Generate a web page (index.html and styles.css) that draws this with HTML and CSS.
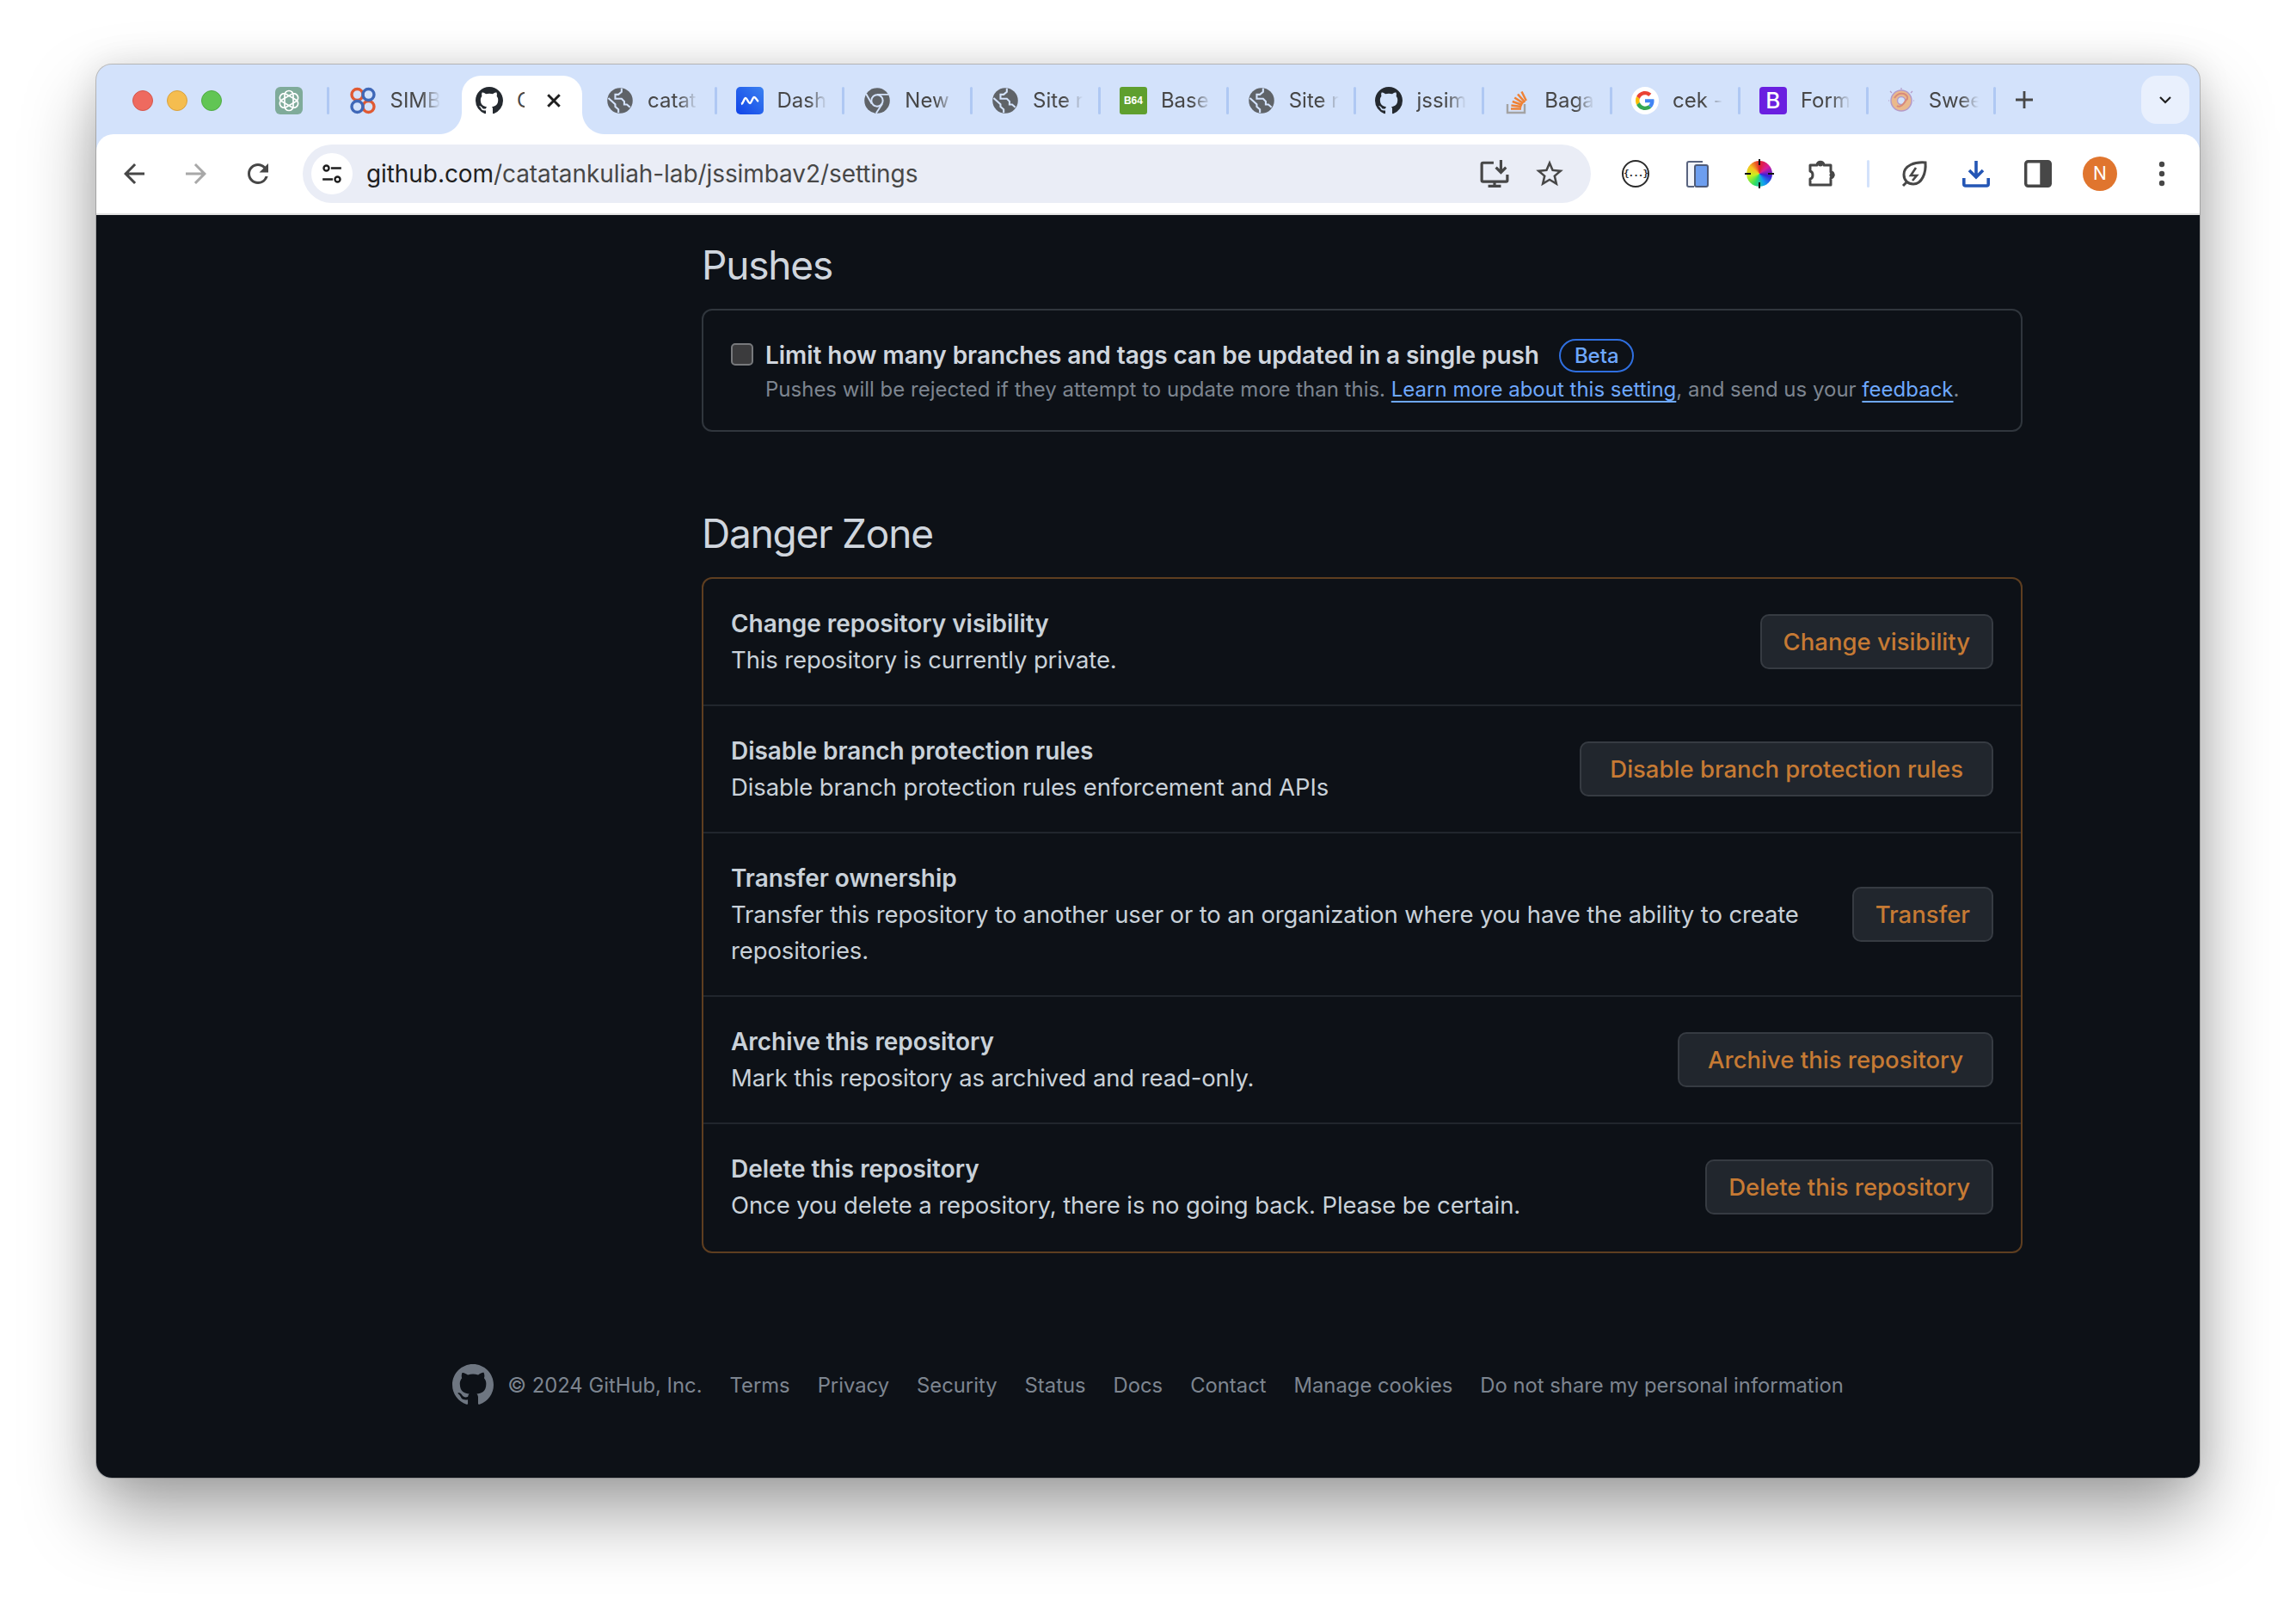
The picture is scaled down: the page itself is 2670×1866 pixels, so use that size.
FILE: index.html
```html
<!DOCTYPE html>
<html lang="en">
<head>
<meta charset="utf-8">
<title>Settings</title>
<link rel="stylesheet" href="styles.css">
</head>
<body>
<svg class="sprite" width="0" height="0" aria-hidden="true">
  <symbol id="gh" viewBox="0 0 16 16"><path d="M8 0c4.42 0 8 3.58 8 8a8.013 8.013 0 0 1-5.45 7.59c-.4.08-.55-.17-.55-.38 0-.27.01-1.13.01-2.2 0-.75-.25-1.23-.54-1.48 1.78-.2 3.65-.88 3.65-3.95 0-.88-.31-1.59-.82-2.15.08-.2.36-1.02-.08-2.12 0 0-.67-.22-2.2.82-.64-.18-1.32-.27-2-.27-.68 0-1.36.09-2 .27-1.53-1.03-2.2-.82-2.2-.82-.44 1.1-.16 1.92-.08 2.12-.51.56-.82 1.28-.82 2.15 0 3.06 1.86 3.75 3.65 3.95-.23.2-.44.55-.51 1.07-.46.21-1.61.55-2.33-.66-.15-.24-.6-.83-1.23-.82-.67.01-.27.38.01.53.34.19.73.9.82 1.13.16.45.68 1.31 2.69.94 0 .67.01 1.3.01 1.49 0 .21-.15.45-.55.38A7.995 7.995 0 0 1 0 8c0-4.42 3.58-8 8-8Z"/></symbol>
  <symbol id="globe" viewBox="-1 -1 26 26"><circle cx="12" cy="12" r="12" fill="#5f6368"/><path d="M1 9.500l6.500 6v2.200l3 2.600v3M13.500 .5v3.200l-3 2.500H7.500v4h6l2.500 2.500v3h2.500l3 2.600" fill="none" stroke="#d3e2fb" stroke-width="1.700"/></symbol>
</svg>

<div class="window">
  <header class="tabstrip">
    <div class="lights">
      <span class="light light-red"></span>
      <span class="light light-yellow"></span>
      <span class="light light-green"></span>
    </div>
    <div class="tab tab-pinned">
      <svg class="fav" viewBox="0 0 32 32"><rect width="32" height="32" rx="6" fill="#7fab9a"/><g fill="none" stroke="#fff" stroke-width="1.700"><rect x="11" y="4.500" width="10" height="23" rx="5"/><rect x="11" y="4.500" width="10" height="23" rx="5" transform="rotate(60 16 16)"/><rect x="11" y="4.500" width="10" height="23" rx="5" transform="rotate(120 16 16)"/></g></svg>
      <span class="sep"></span>
    </div>
    <div class="tab tab-simb">
      <svg class="fav" viewBox="0 0 32 32"><g fill="none" stroke-width="3.400"><circle cx="9.500" cy="9" r="6.500" stroke="#e05a33"/><circle cx="22.500" cy="23" r="6.500" stroke="#e05a33"/><circle cx="22.500" cy="9" r="6.500" stroke="#3f68b8"/><circle cx="9.500" cy="23" r="6.500" stroke="#3f68b8"/></g></svg>
      <span class="tab-label">SIMB</span>
    </div>
    <div class="tab tab-active">
      <svg class="fav fav-dark"><use href="#gh"/></svg>
      <span class="tab-label tab-label-cut">C</span>
      <svg class="tab-close" viewBox="0 0 16 16"><path d="M2 2l12 12M14 2L2 14" stroke="#1f1f1f" stroke-width="2.600" fill="none"/></svg>
    </div>
    <div class="tab tab-catat">
      <svg class="fav"><use href="#globe"/></svg>
      <span class="tab-label">catat</span>
      <span class="sep"></span>
    </div>
    <div class="tab">
      <svg class="fav" viewBox="0 0 32 32"><defs><linearGradient id="dash" x1="1" y1="0" x2="0" y2="1"><stop offset="0" stop-color="#3b82f0"/><stop offset="1" stop-color="#1043e8"/></linearGradient></defs><rect width="32" height="32" rx="5" fill="url(#dash)"/><path d="M6 20c3-1 3-7 5-7s3 6 5 6 3-7 5-7 3 4 5 5" fill="none" stroke="#fff" stroke-width="2.400"/></svg>
      <span class="tab-label">Dash</span>
      <span class="sep"></span>
    </div>
    <div class="tab">
      <svg class="fav" viewBox="-1 -1 26 26"><circle cx="12" cy="12" r="12" fill="#5f6368"/><circle cx="12" cy="12" r="5.400" fill="#5f6368" stroke="#d3e2fb" stroke-width="1.600"/><path d="M12 6.200h11M7 15l-5.500-9.500M16.800 15l-5.800 9" stroke="#d3e2fb" stroke-width="1.600" fill="none"/></svg>
      <span class="tab-label">New</span>
      <span class="sep"></span>
    </div>
    <div class="tab">
      <svg class="fav"><use href="#globe"/></svg>
      <span class="tab-label">Site r</span>
      <span class="sep"></span>
    </div>
    <div class="tab">
      <span class="fav fav-b64">B64</span>
      <span class="tab-label">Base</span>
      <span class="sep"></span>
    </div>
    <div class="tab">
      <svg class="fav"><use href="#globe"/></svg>
      <span class="tab-label">Site r</span>
      <span class="sep"></span>
    </div>
    <div class="tab">
      <svg class="fav fav-dark"><use href="#gh"/></svg>
      <span class="tab-label">jssim</span>
      <span class="sep"></span>
    </div>
    <div class="tab">
      <svg class="fav" viewBox="0 0 32 32"><path d="M5 20v10h20V20" fill="none" stroke="#a3a3a3" stroke-width="2.400"/><path d="M9 25.500h12M9.400 21.500l12 1.500M10.800 17l11.500 4M13.300 12.500l10.200 6.600M17 8.500l8.300 9.300M21.500 5.500l5.300 10.500" stroke="#ef8236" stroke-width="2.500" fill="none"/></svg>
      <span class="tab-label">Baga</span>
      <span class="sep"></span>
    </div>
    <div class="tab">
      <span class="fav fav-google"><svg viewBox="0 0 48 48"><path fill="#EA4335" d="M24 9.500c3.540 0 6.710 1.220 9.210 3.600l6.850-6.850C35.900 2.380 30.470 0 24 0 14.620 0 6.510 5.380 2.560 13.220l7.980 6.190C12.430 13.720 17.740 9.500 24 9.500z"/><path fill="#4285F4" d="M46.980 24.550c0-1.570-.15-3.090-.38-4.550H24v9.020h12.940c-.58 2.960-2.260 5.480-4.780 7.180l7.730 6c4.510-4.180 7.090-10.360 7.090-17.650z"/><path fill="#FBBC05" d="M10.530 28.590c-.48-1.450-.76-2.990-.76-4.590s.27-3.140.76-4.590l-7.980-6.190C.92 16.460 0 20.120 0 24c0 3.880.92 7.540 2.560 10.780l7.970-6.190z"/><path fill="#34A853" d="M24 48c6.480 0 11.930-2.130 15.890-5.810l-7.730-6c-2.150 1.450-4.920 2.300-8.160 2.300-6.260 0-11.570-4.220-13.470-9.910l-7.980 6.190C6.510 42.620 14.620 48 24 48z"/></svg></span>
      <span class="tab-label">cek -</span>
      <span class="sep"></span>
    </div>
    <div class="tab">
      <span class="fav fav-boot">B</span>
      <span class="tab-label">Form</span>
      <span class="sep"></span>
    </div>
    <div class="tab">
      <svg class="fav" viewBox="0 0 32 32"><circle cx="16" cy="16" r="12" fill="#eab98c" stroke="#b49ac8" stroke-width="1.500"/><circle cx="16" cy="16" r="4.500" fill="#d3e2fb" stroke="#b49ac8" stroke-width="1.500"/><path d="M8 13c3-5 7-6 11-5 3 1 5 4 4 6-2 1-2 3-4 5-2 3-6 5-8 3" fill="none" stroke="#d98a7a" stroke-width="2"/><path d="M16 1v2M29 5l-2 2M3 5l2 2M1 16h1M30 16h1" stroke="#b49ac8" stroke-width="1.200"/></svg>
      <span class="tab-label">Swee</span>
      <span class="sep"></span>
    </div>
    <svg class="tab-new" viewBox="0 0 24 24"><path d="M12 2v20M2 12h20" stroke="#474747" stroke-width="2.800"/></svg>
    <div class="tab-search">
      <svg viewBox="0 0 16 16"><path d="M2 5l6 6 6-6" fill="none" stroke="#1f1f1f" stroke-width="2.200"/></svg>
    </div>
  </header>

  <nav class="toolbar">
    <span class="tool tool-nav"><svg viewBox="0 0 24 24"><path fill="#474747" d="M20 11H7.830l5.590-5.590L12 4l-8 8 8 8 1.410-1.410L7.830 13H20v-2z"/></svg></span>
    <span class="tool tool-nav"><svg viewBox="0 0 24 24"><path fill="#a8a8a8" d="M12 4l-1.410 1.410L16.170 11H4v2h12.170l-5.580 5.590L12 20l8-8z"/></svg></span>
    <span class="tool tool-nav"><svg viewBox="0 0 24 24"><path fill="#474747" d="M17.650 6.350A7.958 7.958 0 0 0 12 4c-4.420 0-7.990 3.580-7.990 8s3.570 8 7.990 8c3.730 0 6.840-2.550 7.730-6h-2.080A5.990 5.990 0 0 1 12 18c-3.310 0-6-2.690-6-6s2.690-6 6-6c1.660 0 3.140.69 4.220 1.780L13 11h7V4l-2.350 2.350z"/></svg></span>
    <div class="omnibox">
      <span class="site-info"><svg viewBox="0 0 24 24"><g fill="none" stroke="#1f1f1f" stroke-width="2.200"><circle cx="6" cy="6" r="2.800"/><circle cx="18" cy="18" r="2.800"/><path d="M11 6h11M2 18h11"/></g></svg></span>
      <span class="url"><span class="url-host">github.com</span>/catatankuliah-lab/jssimbav2/settings</span>
      <span class="omni-tool"><svg viewBox="0 0 32 32"><path d="M15 4H3.500A1.500 1.500 0 0 0 2 5.500V23a1.500 1.500 0 0 0 1.500 1.500h25A1.500 1.500 0 0 0 30 23V17" fill="none" stroke="#474747" stroke-width="3"/><path d="M9 29.500h14M16 24v5" stroke="#474747" stroke-width="3"/><path d="M23 1v12M17.500 9l5.500 5.500L28.500 9" fill="none" stroke="#474747" stroke-width="3"/></svg></span>
      <span class="omni-tool omni-star"><svg viewBox="0 0 24 24"><path fill="#474747" d="M22 9.240l-7.190-.62L12 2 9.190 8.630 2 9.240l5.460 4.730L5.820 21 12 17.270 18.180 21l-1.630-7.030L22 9.240zM12 15.400l-3.760 2.270 1-4.280-3.320-2.880 4.380-.38L12 6.100l1.710 4.040 4.380.38-3.320 2.880 1 4.280L12 15.400z"/></svg></span>
    </div>
    <div class="tools">
      <span class="tool"><span class="json-icon">{...}</span></span>
      <span class="tool"><svg viewBox="0 0 28 32"><path d="M20 2H4a2 2 0 0 0-2 2v25a2 2 0 0 0 2 2h6" fill="#f4f6fb" stroke="#59647f" stroke-width="2"/><rect x="11" y="6" width="15" height="25" rx="2" fill="#6d9eef" stroke="#4f5b78" stroke-width="2"/></svg></span>
      <span class="tool"><span class="wheel"></span></span>
      <span class="tool"><svg viewBox="0 0 32 32"><path d="M3 6h8c0-5 8-5 8 0h8v8c4 0 4 6 0 7v8H3v-7c4-1 4-8 0-9z" fill="none" stroke="#474747" stroke-width="3" stroke-linejoin="round"/><circle cx="15" cy="4.500" r="3" fill="#474747"/><circle cx="28.500" cy="17.500" r="3" fill="#474747"/></svg></span>
      <span class="tool-sep"></span>
      <span class="tool"><svg viewBox="0 0 32 32"><path d="M29 3C17 2 4 6 4 17c0 7 5 11 11 11 10 0 15-13 14-25z" fill="none" stroke="#474747" stroke-width="3"/><path d="M7 26l-4 4" stroke="#474747" stroke-width="3"/><path d="M18 9l-6 9h7l-5 6" fill="none" stroke="#474747" stroke-width="2.600"/></svg></span>
      <span class="tool"><svg viewBox="0 0 32 32"><path d="M16 1v18M8 12l8 8 8-8" fill="none" stroke="#2456b5" stroke-width="3.600"/><path d="M1.800 21v7a2 2 0 0 0 2 2h24.400a2 2 0 0 0 2-2v-7" fill="none" stroke="#2456b5" stroke-width="3.600"/></svg></span>
      <span class="tool"><svg viewBox="0 0 28 28"><rect x="1.500" y="1.500" width="25" height="25" rx="2.500" fill="#fff" stroke="#474747" stroke-width="3"/><rect x="16" y="1.500" width="10.500" height="25" fill="#474747"/></svg></span>
      <span class="tool"><span class="avatar">N</span></span>
      <span class="tool"><svg viewBox="0 0 8 32"><circle cx="4" cy="5" r="3.200" fill="#474747"/><circle cx="4" cy="16" r="3.200" fill="#474747"/><circle cx="4" cy="27" r="3.200" fill="#474747"/></svg></span>
    </div>
  </nav>

  <main class="page">
    <div class="column">
      <h2 class="section-title">Pushes</h2>
      <section class="box">
        <div class="push-row">
          <span class="checkbox"></span>
          <div>
            <div class="push-title">Limit how many branches and tags can be updated in a single push <span class="beta">Beta</span></div>
            <p class="push-note">Pushes will be rejected if they attempt to update more than this. <a href="#">Learn more about this setting</a>, and send us your <a href="#">feedback</a>.</p>
          </div>
        </div>
      </section>

      <h2 class="section-title section-title-danger">Danger Zone</h2>
      <section class="box box-danger">
        <div class="danger-row">
          <div class="danger-text"><strong>Change repository visibility</strong><p>This repository is currently private.</p></div>
          <button class="btn">Change visibility</button>
        </div>
        <div class="danger-row">
          <div class="danger-text"><strong>Disable branch protection rules</strong><p>Disable branch protection rules enforcement and APIs</p></div>
          <button class="btn btn-wide">Disable branch protection rules</button>
        </div>
        <div class="danger-row">
          <div class="danger-text"><strong>Transfer ownership</strong><p>Transfer this repository to another user or to an organization where you have the ability to create repositories.</p></div>
          <button class="btn">Transfer</button>
        </div>
        <div class="danger-row">
          <div class="danger-text"><strong>Archive this repository</strong><p>Mark this repository as archived and read-only.</p></div>
          <button class="btn btn-wide">Archive this repository</button>
        </div>
        <div class="danger-row">
          <div class="danger-text"><strong>Delete this repository</strong><p>Once you delete a repository, there is no going back. Please be certain.</p></div>
          <button class="btn">Delete this repository</button>
        </div>
      </section>
    </div>

    <footer class="footer">
      <svg class="footer-logo"><use href="#gh"/></svg>
      <span class="footer-copy">© 2024 GitHub, Inc.</span>
      <a href="#">Terms</a>
      <a href="#">Privacy</a>
      <a href="#">Security</a>
      <a href="#">Status</a>
      <a href="#">Docs</a>
      <a href="#">Contact</a>
      <a href="#">Manage cookies</a>
      <a href="#">Do not share my personal information</a>
    </footer>
  </main>
</div>
</body>
</html>
```
FILE: styles.css
```css
* { box-sizing: border-box; }
html, body { margin: 0; height: 100%; }
body {
  background: #fff;
  padding: 75px 0 0 112px;
  font-family: Inter, "Liberation Sans", sans-serif;
  overflow: hidden;
}
.sprite { display: block; height: 0; }

.window {
  width: 2446px;
  height: 1643px;
  border-radius: 18px;
  overflow: hidden;
  background: #d3e2fb;
  box-shadow: 0 0 0 1px rgba(120,120,120,.45), 0 42px 84px rgba(0,0,0,.36), 0 0 40px rgba(0,0,0,.1);
  display: flex;
  flex-direction: column;
}

/* Tab strip */
.tabstrip { height: 81px; display: flex; align-items: flex-start; padding-top: 13px; flex: none; }
.lights { display: flex; gap: 16px; margin: 17px 0 0 42px; width: 104px; flex: none; }
.light { width: 24px; height: 24px; border-radius: 50%; border: 1px solid; }
.light-red { background: #ee6a5f; border-color: #d5574c; }
.light-yellow { background: #f5bd4f; border-color: #d9a13c; }
.light-green { background: #61c554; border-color: #50ab44; }

.tab {
  width: 148.800px;
  height: 58px;
  display: flex;
  align-items: center;
  padding-left: 22px;
  flex: none;
  color: #474747;
  font-size: 24px;
}
.tab-pinned { width: 124.500px; padding-left: 62px; }
.tab-simb { width: 149.500px; padding-left: 23px; }
.tab-catat { width: 151.500px; padding-left: 23px; }
.fav { width: 32px; height: 32px; flex: none; display: block; }
.fav-dark { fill: #24292f; }
.fav-b64 {
  background: #5f9f2e;
  border-radius: 3px;
  color: #fff;
  font: 700 12px/32px "Liberation Sans", sans-serif;
  text-align: center;
}
.fav-boot {
  background: #6a1fe0;
  border-radius: 4px;
  color: #fff;
  font: 500 26px/32px Inter, sans-serif;
  text-align: center;
}
.fav-google { background: #fff; border-radius: 50%; padding: 5px; }
.fav-google svg { display: block; width: 22px; height: 22px; }
.tab-label {
  width: 58px;
  margin-left: 16px;
  white-space: nowrap;
  overflow: hidden;
  flex: none;
  line-height: 32px;
  -webkit-mask-image: linear-gradient(90deg, #000 62%, transparent 100%);
  mask-image: linear-gradient(90deg, #000 62%, transparent 100%);
}
.sep { width: 3px; height: 32px; margin-left: auto; background: #afc8f3; border-radius: 2px; flex: none; }

.tab-active {
  position: relative;
  width: 140px;
  height: 68px;
  margin: 0 5px;
  padding: 0 0 10px 16px;
  background: #fff;
  border-radius: 22px 22px 0 0;
}
.tab-active::before, .tab-active::after {
  content: "";
  position: absolute;
  bottom: 0;
  width: 26px;
  height: 26px;
}
.tab-active::before { left: -26px; background: radial-gradient(circle at 0 0, transparent 25.500px, #fff 26.500px); }
.tab-active::after { right: -26px; background: radial-gradient(circle at 100% 0, transparent 25.500px, #fff 26.500px); }
.tab-label-cut { width: 9px; -webkit-mask-image: none; mask-image: none; }
.tab-close { width: 18px; height: 18px; margin-left: 25px; flex: none; }

.tab-new { width: 24px; height: 24px; margin: 16px 0 0 21px; flex: none; }
.tab-search {
  width: 56px;
  height: 56px;
  margin-left: auto;
  margin-right: 12px;
  background: #e9f0fd;
  border-radius: 18px;
  display: flex;
  align-items: center;
  justify-content: center;
  flex: none;
}
.tab-search svg { width: 16px; height: 16px; }

/* Toolbar */
.toolbar {
  height: 94px;
  flex: none;
  background: #fff;
  border-radius: 20px 20px 0 0;
  border-bottom: 2px solid #e3e3e3;
  display: flex;
  align-items: center;
  padding-left: 8px;
}
.tool { width: 72px; height: 44px; display: flex; align-items: center; justify-content: center; flex: none; }
.tool svg { height: 32px; width: 32px; display: block; }
.tool-nav svg { height: 36px; width: 36px; }
.omnibox {
  width: 1498px;
  height: 68px;
  margin-left: 16px;
  background: #eaedf6;
  border-radius: 34px;
  display: flex;
  align-items: center;
  padding: 0 16px 0 10px;
  flex: none;
}
.site-info {
  width: 48px;
  height: 48px;
  background: #fff;
  border-radius: 50%;
  display: flex;
  align-items: center;
  justify-content: center;
  flex: none;
}
.site-info svg { width: 26px; height: 26px; }
.url { margin-left: 16px; font-size: 28px; letter-spacing: -.08px; color: #474747; white-space: nowrap; flex: 1; }
.url-host { color: #1f1f1f; }
.omni-tool { width: 64px; display: flex; justify-content: center; flex: none; }
.omni-tool svg { width: 34px; height: 34px; display: block; }
.omni-star svg { width: 38px; height: 38px; }
.tools { display: flex; align-items: center; margin-left: 16px; }
.tool-sep { width: 36px; display: flex; justify-content: center; flex: none; height: 32px; }
.tool-sep::before { content: ""; width: 3px; background: #d3e2fb; border-radius: 2px; }
.json-icon {
  width: 32px;
  height: 32px;
  border: 2px solid #2b2b2b;
  border-radius: 50%;
  font: 700 11px/28px "DejaVu Sans Mono", monospace;
  color: #2b2b2b;
  text-align: center;
  letter-spacing: -1px;
}
.wheel {
  position: relative;
  width: 30px;
  height: 30px;
  border-radius: 50%;
  background: conic-gradient(#e0202a, #d81e9c, #3a1fd8, #10a0f0, #30e060, #c8f020, #f8c020, #e0202a);
}
.wheel::before, .wheel::after { content: ""; position: absolute; background: #111; }
.wheel::before { left: 14px; top: -2px; width: 2px; height: 34px; background: linear-gradient(#111 0 7px, transparent 7px 27px, #111 27px); }
.wheel::after { top: 14px; left: -2px; height: 2px; width: 34px; background: linear-gradient(90deg, #111 0 7px, transparent 7px 27px, #111 27px); }
.avatar {
  width: 40px;
  height: 40px;
  border-radius: 50%;
  background: #e0752e;
  color: #fff;
  font-size: 21px;
  line-height: 40px;
  text-align: center;
}

/* Page */
.page { flex: 1; background: #0d1117; color: #e6edf3; padding: 0 0 0 704px; min-height: 0; }
.column { width: 1536px; padding-top: 28px; }
.section-title { margin: 0 0 21px; font-size: 46px; line-height: 60px; font-weight: 400; color: #d0d6de; letter-spacing: -1.200px; }
.section-title-danger { margin-top: 88px; }
.box { border: 2px solid #30363d; border-radius: 12px; }
.box-danger { border-color: #5e3e20; }
.push-row { display: flex; gap: 14px; padding: 31px 32px 28px; }
.checkbox { width: 26px; height: 26px; margin-top: 7px; background: #3b3b3d; border: 2px solid #77797c; border-radius: 5px; flex: none; }
.push-title { font-size: 28px; line-height: 42px; font-weight: 600; color: #d0d6de; letter-spacing: -.05px; }
.beta {
  display: inline-block;
  margin: -3px 0 0 16px;
  padding: 0 16px;
  height: 39px;
  line-height: 35px;
  border: 2px solid #2f6fe0;
  border-radius: 20px;
  font-size: 24px;
  font-weight: 500;
  color: #6ea8fe;
  vertical-align: middle;
}
.push-note { margin: 0; font-size: 24px; line-height: 38px; color: #7d8590; }
.push-note a { color: #6ea8fe; text-decoration: underline; text-underline-offset: 5px; text-decoration-thickness: 2px; }

.danger-row {
  display: flex;
  align-items: center;
  justify-content: space-between;
  gap: 56px;
  padding: 31px 32px;
  border-top: 2px solid #21262d;
}
.danger-row:first-child { border-top: 0; }
.danger-row:last-child { padding-bottom: 33px; }
.danger-text { font-size: 27.500px; line-height: 42px; letter-spacing: -.12px; color: #c9d1d9; }
.danger-text strong { font-size: 28px; letter-spacing: -.05px; font-weight: 600; display: block; }
.danger-text p { margin: 0; }
.btn {
  height: 64px;
  padding: 0 25px;
  font: 500 27.500px Inter, sans-serif;
  color: #c67a34;
  background: #21262d;
  border: 2px solid #363b42;
  border-radius: 10px;
  white-space: nowrap;
  flex: none;
}
.btn-wide { padding: 0 33px; }

.footer {
  display: flex;
  align-items: center;
  justify-content: center;
  gap: 32px;
  margin: 129px 0 0 -704px;
  font-size: 23.800px;
  color: #7d8590;
}
.footer a { color: #7d8590; text-decoration: none; }
.footer-logo { width: 48px; height: 48px; fill: #6e7681; margin-right: -16px; }
```
